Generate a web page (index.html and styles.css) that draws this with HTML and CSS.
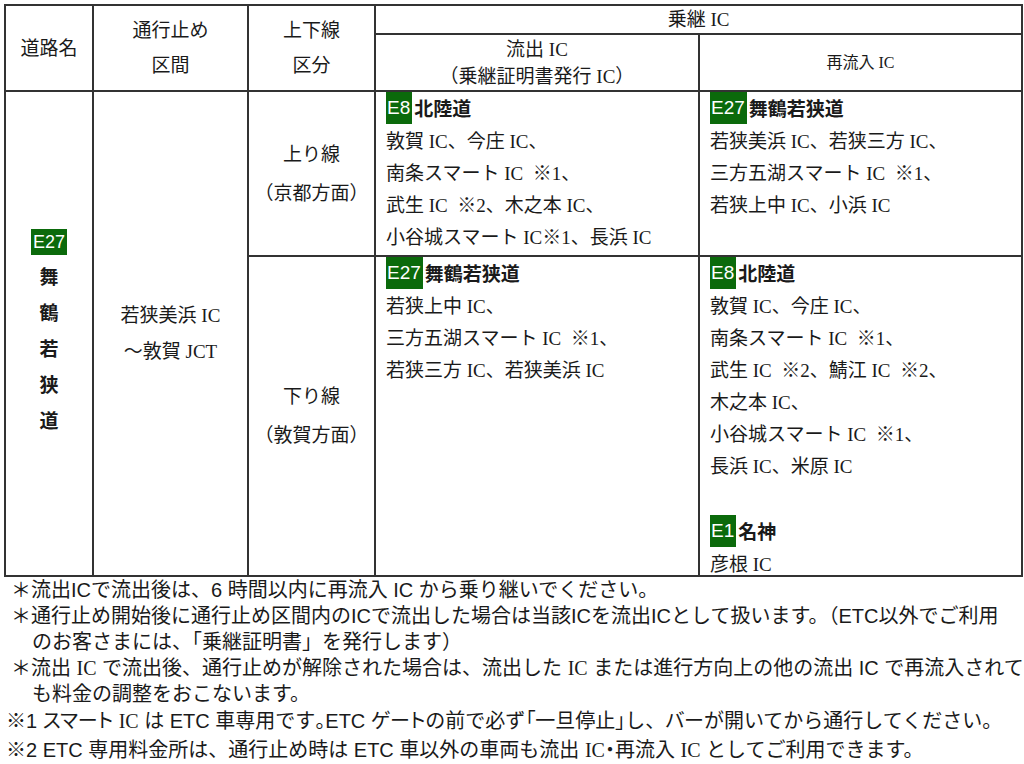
FILE: index.html
```html
<!DOCTYPE html>
<html lang="ja">
<head>
<meta charset="utf-8">
<title>乗継IC</title>
<link rel="stylesheet" href="styles.css">
</head>
<body>
<div class="page">
<table class="ic">
<colgroup><col class="c1"><col class="c2"><col class="c3"><col class="c4"><col class="c5"></colgroup>
<thead>
<tr class="h1">
<th rowspan="2" class="hd">道路名</th>
<th rowspan="2" class="hd tall">通行止め<br>区間</th>
<th rowspan="2" class="hd tall">上下線<br>区分</th>
<th colspan="2" class="hd">乗継 IC</th>
</tr>
<tr class="h2">
<th class="hd mid">流出 IC<br>（乗継証明書発行 IC）</th>
<th class="hd small">再流入 IC</th>
</tr>
</thead>
<tbody>
<tr class="r1">
<td rowspan="2" class="road"><div class="road-in"><span class="badge-lg">E27</span><span class="vname">舞<br>鶴<br>若<br>狭<br>道</span></div></td>
<td rowspan="2" class="sect">若狭美浜 IC<br>～敦賀 JCT</td>
<td class="dir">上り線<br>（京都方面）</td>
<td class="list"><span class="badge">E8</span><b class="rn">北陸道</b><br>敦賀 IC、今庄 IC、<br>南条スマート IC &nbsp;※1、<br>武生 IC &nbsp;※2、木之本 IC、<br>小谷城スマート IC※1、長浜 IC</td>
<td class="list"><span class="badge">E27</span><b class="rn">舞鶴若狭道</b><br>若狭美浜 IC、若狭三方 IC、<br>三方五湖スマート IC &nbsp;※1、<br>若狭上中 IC、小浜 IC</td>
</tr>
<tr class="r2">
<td class="dir">下り線<br>（敦賀方面）</td>
<td class="list"><span class="badge">E27</span><b class="rn">舞鶴若狭道</b><br>若狭上中 IC、<br>三方五湖スマート IC &nbsp;※1、<br>若狭三方 IC、若狭美浜 IC</td>
<td class="list"><span class="badge">E8</span><b class="rn">北陸道</b><br>敦賀 IC、今庄 IC、<br>南条スマート IC &nbsp;※1、<br>武生 IC &nbsp;※2、鯖江 IC &nbsp;※2、<br>木之本 IC、<br>小谷城スマート IC &nbsp;※1、<br>長浜 IC、米原 IC<br><br><span class="badge">E1</span><b class="rn">名神</b><span class="last">彦根 IC</span></td>
</tr>
</tbody>
</table>
<div class="notes">
<p class="ast">＊流出ICで流出後は、6 時間以内に再流入 IC から乗り継いでください。</p>
<p class="ast">＊通行止め開始後に通行止め区間内のICで流出した場合は当該ICを流出ICとして扱います。（ETC以外でご利用<br>のお客さまには、「乗継証明書」を発行します）</p>
<p class="ast">＊流出 <span class="ser">IC</span> で流出後、通行止めが解除された場合は、流出した <span class="ser">IC</span> または進行方向上の他の流出 IC で再流入されて<br>も料金の調整をおこないます。</p>
<p class="kome">※1 <span class="pr">スマート</span> <span class="ser">IC</span> は ETC 車専用です<span class="pr">。</span>ETC <span class="pr">ゲート</span>の前で必ず<span class="pr">「</span>一旦停止<span class="pr">」</span>し、<span class="pr">バー</span>が開いてから通行してください。</p>
<p class="kome">※2 ETC 専用料金所は、通行止め時は ETC 車以外の車両も流出 <span class="ser">IC</span><span class="pr">・</span>再流入 <span class="ser">IC</span> としてご利用できます。</p>
</div>
</div>
</body>
</html>
```

FILE: styles.css
```css
html, body {
  margin: 0;
  padding: 0;
  background: #ffffff;
}
body {
  color: #1a1a1a;
  font-family: "Liberation Serif", "Noto Sans CJK JP", serif;
  font-size: 20px;
}
.page {
  padding: 4px 0 0 4px;
}
table.ic {
  border-collapse: collapse;
  table-layout: fixed;
  width: 1017px;
}
.c1 { width: 88px; }
.c2 { width: 155px; }
.c3 { width: 127px; }
.c4 { width: 324px; }
.c5 { width: 323px; }
th, td {
  border: 2px solid #333333;
  padding: 0;
  font-weight: normal;
  text-align: center;
  vertical-align: middle;
}
.h1 { height: 29px; }
.h2 { height: 57px; }
.r1 { height: 165px; }
.r2 { height: 316px; }
.hd {
  font-family: "Liberation Serif", "Noto Sans CJK JP", serif;
  font-size: 19px;
  line-height: 27px;
}
.hd.tall { line-height: 35px; }
.hd.small { font-size: 16px; }
.road-in {
  display: flex;
  flex-direction: column;
  align-items: center;
}
.badge-lg {
  display: block;
  background: #0b6a0b;
  color: #ffffff;
  font-family: "Liberation Sans", sans-serif;
  font-size: 18px;
  line-height: 26px;
  height: 26px;
  padding: 0 2px;
  margin-bottom: 3px;
}
.vname {
  font-family: "Noto Sans CJK JP", sans-serif;
  font-weight: 700;
  font-size: 19px;
  line-height: 36px;
}
.sect {
  line-height: 36px;
  font-size: 19px;
}
.dir {
  line-height: 39px;
  font-size: 19px;
}
td.list {
  text-align: left;
  vertical-align: top;
  padding-left: 10px;
  font-size: 19px;
  line-height: 32px;
  white-space: nowrap;
}
.last {
  display: block;
  height: 26px;
}
.badge {
  display: inline-block;
  vertical-align: top;
  height: 32px;
  line-height: 32px;
  background: #0b6a0b;
  color: #ffffff;
  font-family: "Liberation Sans Narrow", "Liberation Sans", sans-serif;
  font-size: 19px;
  padding: 0 2px 0 1px;
  margin-right: 2px;
}
.rn {
  font-family: "Noto Sans CJK JP", sans-serif;
  font-weight: 700;
}
.notes {
  font-family: "Liberation Sans", "Noto Sans CJK JP", sans-serif;
  font-size: 20px;
  color: #1a1a1a;
}
.notes p {
  margin: 0;
  white-space: nowrap;
}
.ast {
  padding-left: 28px;
  text-indent: -21px;
  line-height: 26px;
}
.kome {
  padding-left: 2px;
  line-height: 29px;
}
.pr {
  font-feature-settings: "palt";
}
.ser {
  font-family: "Liberation Serif", serif;
}
```
